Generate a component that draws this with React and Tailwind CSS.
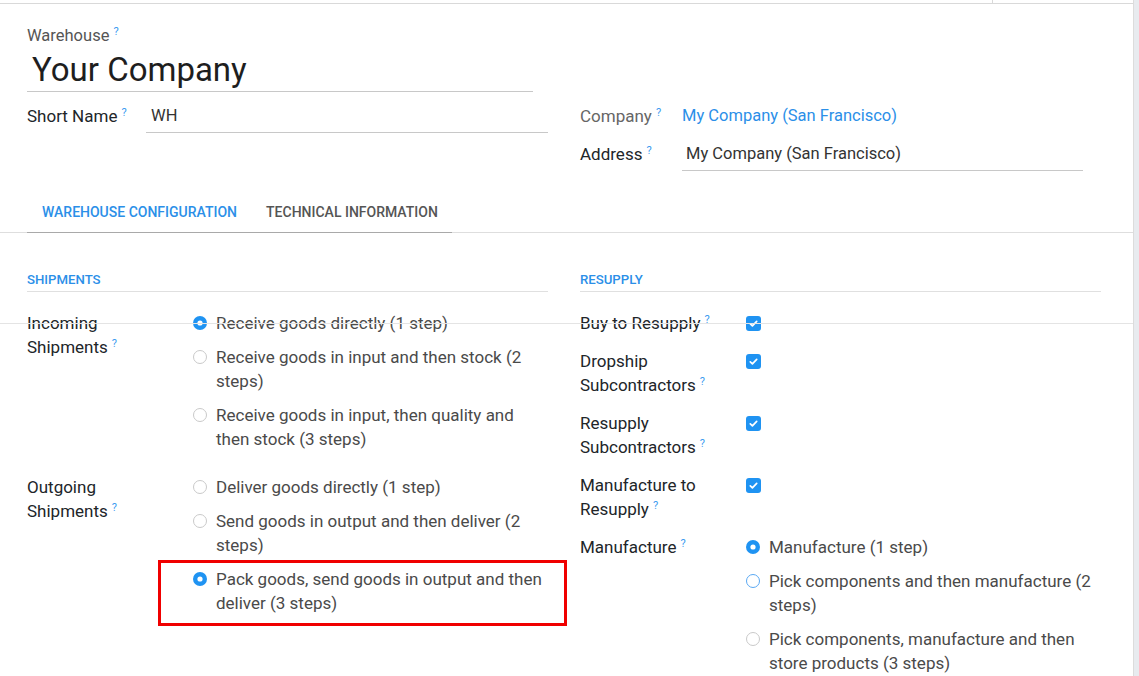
import React from 'react';

const Q = () => (
    <span className="relative -top-[6px] ml-[4px] text-[11px] leading-none text-[#3d9bf0]">?</span>
);

const Radio = ({ checked, hover }) => (
    <span className="flex h-[24px] w-[14px] shrink-0 items-center">
        {checked ? (
            <svg width="14" height="14" viewBox="0 0 14 14">
                <circle cx="7" cy="7" r="7" fill="#1f93f2" />
                <circle cx="7" cy="7" r="2.6" fill="#fff" />
            </svg>
        ) : (
            <svg width="14" height="14" viewBox="0 0 14 14">
                <circle cx="7" cy="7" r="6.5" fill="#fff" stroke={hover ? '#5aa8f2' : '#c9c9c9'} strokeWidth="1" />
            </svg>
        )}
    </span>
);

const Check = () => (
    <span className="flex h-[24px] w-[15px] shrink-0 items-center">
        <svg width="15" height="15" viewBox="0 0 15 15">
            <rect x="0" y="0" width="15" height="15" rx="3" fill="#1f93f2" />
            <path d="M4.3 7.8 L6.4 9.8 L10.7 5.4" fill="none" stroke="#fff" strokeWidth="1.7" strokeLinecap="round" strokeLinejoin="round" />
        </svg>
    </span>
);

const Option = ({ checked, hover, children }) => (
    <div className="flex items-start">
        <Radio checked={checked} hover={hover} />
        <span className="ml-[9px] flex-1 text-[#4a4a4a]">{children}</span>
    </div>
);

const Label = ({ children }) => (
    <div className="w-[166px] shrink-0 pr-[20px] text-[#212529]">{children}</div>
);

export default function App() {
    return (
        <div className="relative flex h-[676px] w-[1139px] overflow-hidden bg-white font-[Roboto,sans-serif] text-[17px] leading-[24px]">
            <div className="w-[1134px] shrink-0 border-r border-[#dcdcdc]">
                {/* barre du haut */}
                <div className="flex h-[4px] border-b border-[#d9d9d9]">
                    <div className="w-[993px] border-r border-[#d9d9d9]" />
                </div>

                <div className="px-[27px]">
                    <div className="pt-[22px] text-[16.5px] leading-[20px] text-[#555]">
                        Warehouse<Q />
                    </div>
                    <div className="w-[506px] border-b border-[#c8c8c8] pl-[5px] pt-[4px] pb-[1px] text-[33px] leading-[40px] text-[#1e1e1e]">
                        Your Company
                    </div>

                    <div className="mt-[12px] grid grid-cols-[521px_521px] items-start gap-x-[32px]">
                        <div className="flex">
                            <div className="w-[119px] shrink-0 text-[#212529]">
                                Short Name<Q />
                            </div>
                            <div className="w-[402px] border-b border-[#c8c8c8] pl-[5px] pb-[4px] text-[16.5px] text-[#333]">WH</div>
                        </div>
                        <div className="flex flex-col gap-[10px]">
                            <div className="flex pb-[4px]">
                                <div className="w-[102px] shrink-0 text-[#666]">
                                    Company<Q />
                                </div>
                                <div className="text-[16.5px] text-[#2b8fe8]">My Company (San Francisco)</div>
                            </div>
                            <div className="flex">
                                <div className="w-[102px] shrink-0 text-[#212529]">
                                    Address<Q />
                                </div>
                                <div className="w-[401px] border-b border-[#c8c8c8] pl-[4px] pb-[4px] text-[16.5px] text-[#333]">
                                    My Company (San Francisco)
                                </div>
                            </div>
                        </div>
                    </div>
                </div>

                {/* onglets */}
                <div className="mt-[21px] border-b border-[#dedede] px-[27px]">
                    <div className="-mb-px flex w-fit whitespace-nowrap border-b border-[#a9a9a9] text-[14px] font-medium leading-[20px]">
                        <div className="px-[15px] py-[10px] text-[#2b8fe8]">WAREHOUSE CONFIGURATION</div>
                        <div className="px-[14px] py-[10px] text-[#555]">TECHNICAL INFORMATION</div>
                    </div>
                </div>

                <div className="grid grid-cols-[521px_521px] items-start gap-x-[32px] px-[27px]">
                    {/* Shipments */}
                    <div>
                        <div className="mt-[38px] border-b border-[#e0e0e0] pb-[2px] text-[13.2px] font-medium leading-[18px] text-[#2b8fe8]">
                            SHIPMENTS
                        </div>
                        <div className="mt-[19px] flex flex-col gap-[24px]">
                            <div className="flex">
                                <Label>
                                    Incoming Shipments<Q />
                                </Label>
                                <div className="flex flex-1 flex-col gap-[10px]">
                                    <Option checked>Receive goods directly (1 step)</Option>
                                    <Option>Receive goods in input and then stock (2 steps)</Option>
                                    <Option>Receive goods in input, then quality and then stock (3 steps)</Option>
                                </div>
                            </div>
                            <div className="flex">
                                <Label>
                                    Outgoing Shipments<Q />
                                </Label>
                                <div className="flex flex-1 flex-col gap-[10px]">
                                    <Option>Deliver goods directly (1 step)</Option>
                                    <Option>Send goods in output and then deliver (2 steps)</Option>
                                    <div className="relative">
                                        <Option checked>Pack goods, send goods in output and then deliver (3 steps)</Option>
                                        <div className="pointer-events-none absolute -top-[7px] -bottom-[11px] -left-[35px] -right-[19px] border-[3px] border-[#f00000]" />
                                    </div>
                                </div>
                            </div>
                        </div>
                    </div>

                    {/* Resupply */}
                    <div>
                        <div className="mt-[38px] border-b border-[#e0e0e0] pb-[2px] text-[13.2px] font-medium leading-[18px] text-[#2b8fe8]">
                            RESUPPLY
                        </div>
                        <div className="mt-[19px] flex flex-col gap-[14px]">
                            <div className="flex">
                                <Label>
                                    Buy to Resupply<Q />
                                </Label>
                                <Check />
                            </div>
                            <div className="flex">
                                <Label>
                                    Dropship Subcontractors<Q />
                                </Label>
                                <Check />
                            </div>
                            <div className="flex">
                                <Label>
                                    Resupply Subcontractors<Q />
                                </Label>
                                <Check />
                            </div>
                            <div className="flex">
                                <Label>
                                    Manufacture to Resupply<Q />
                                </Label>
                                <Check />
                            </div>
                            <div className="flex">
                                <Label>
                                    Manufacture<Q />
                                </Label>
                                <div className="flex flex-1 flex-col gap-[10px]">
                                    <Option checked>Manufacture (1 step)</Option>
                                    <Option hover>Pick components and then manufacture (2 steps)</Option>
                                    <Option>Pick components, manufacture and then store products (3 steps)</Option>
                                </div>
                            </div>
                        </div>
                    </div>
                </div>
            </div>
            <div className="flex-1 bg-[#e8ebef]" />

            {/* trait fin qui traverse la page */}
            <div className="pointer-events-none absolute left-0 top-[323px] h-px w-[1133px] bg-[#e4e4e4]" />
        </div>
    );
}
